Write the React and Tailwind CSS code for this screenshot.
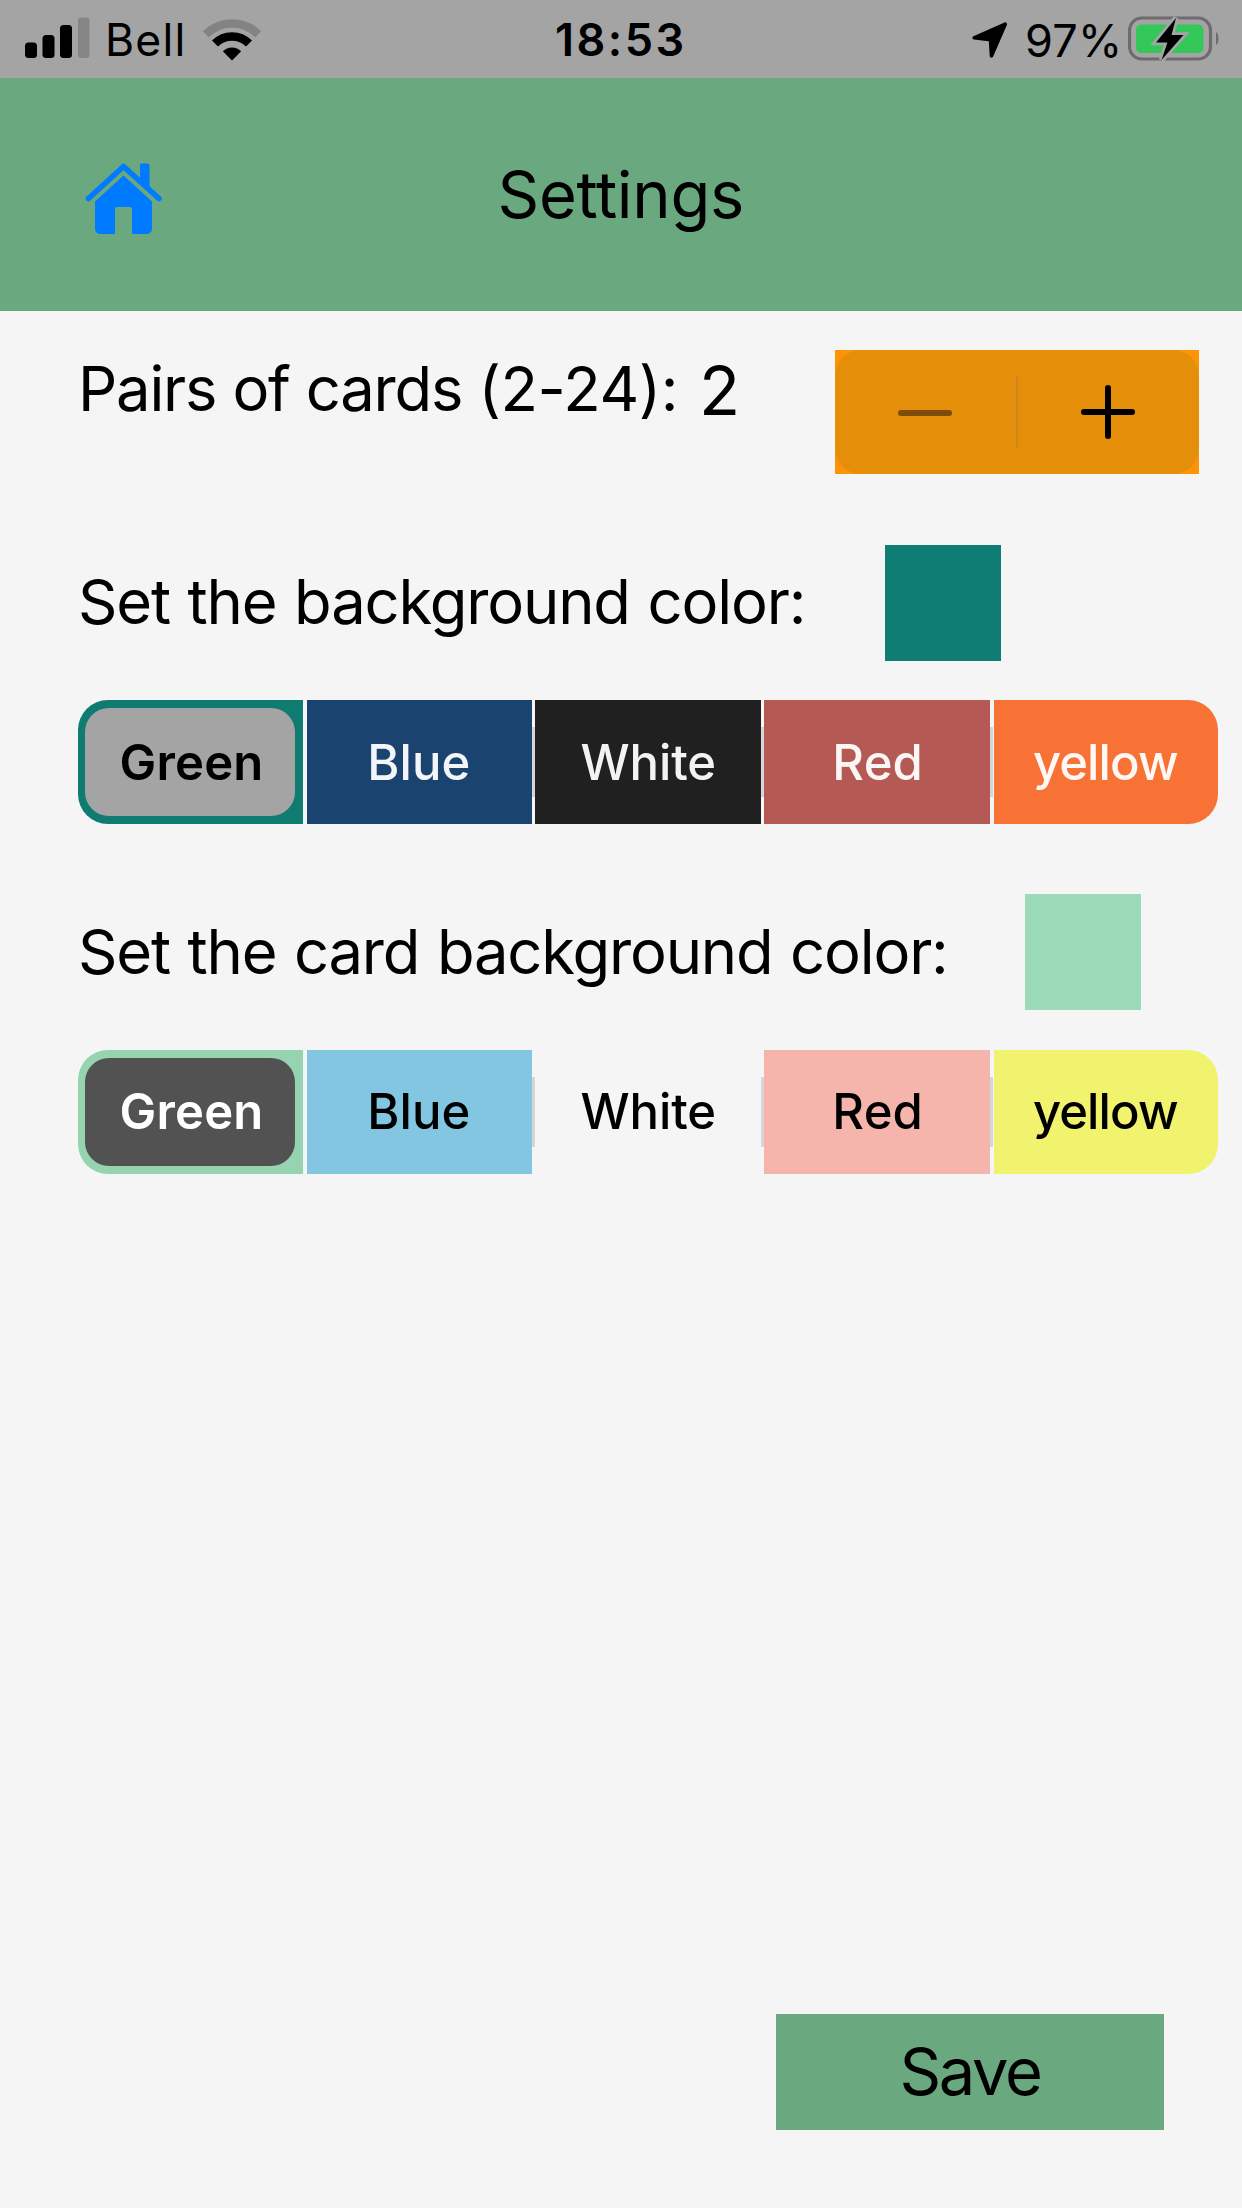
const backgroundColors = [
  { name: "Green", cell: "w-[225px] mr-[4px] rounded-l-[30px] bg-[#0f7b71]", label: "pl-[3px] tracking-[0.2px]", selected: true },
  { name: "Blue", cell: "w-[225.5px] mr-[3px] bg-[#1b436f]", label: "tracking-[0.1px] pr-[1px]" },
  { name: "White", cell: "w-[225.5px] mr-[3.5px] bg-[#202020]", label: "pl-[1px] tracking-[-0.1px]" },
  { name: "Red", cell: "w-[225.5px] mr-[4px] bg-[#b55955]", label: "pl-[2px] tracking-[0.2px]" },
  { name: "yellow", cell: "w-[224.5px] rounded-r-[30px] bg-[#f87236]", label: "pr-[1px] tracking-[-0.9px]" },
];

const cardColors = [
  { name: "Green", cell: "w-[225px] mr-[4px] rounded-l-[30px] bg-[#95d3b1]", label: "pl-[3px] tracking-[0.2px]", selected: true },
  { name: "Blue", cell: "w-[225.5px] mr-[3px] bg-[#83c6e2]", label: "tracking-[0.1px] pr-[1px]" },
  { name: "White", cell: "w-[225.5px] mr-[3.5px]", label: "pl-[1px] tracking-[-0.1px]" },
  { name: "Red", cell: "w-[225.5px] mr-[4px] bg-[#f5b5ac]", label: "pl-[2px] tracking-[0.2px]" },
  { name: "yellow", cell: "w-[224.5px] rounded-r-[30px] bg-[#f1f26e]", label: "pr-[1px] tracking-[-0.9px]" },
];

function SignalBars() {
  return (
    <svg width="66" height="42" viewBox="0 0 66 42">
      <rect x="0" y="25.5" width="12" height="15.5" rx="3.5" />
      <rect x="17.5" y="18" width="12" height="23" rx="3.5" />
      <rect x="35" y="8" width="12" height="33" rx="3.5" />
      <rect x="53" y="0.5" width="11.5" height="40.5" rx="3" fill="#868686" />
    </svg>
  );
}

function Wifi() {
  return (
    <svg width="60" height="44" viewBox="0 0 60 44" fill="none">
      <path d="M3.8 16.3A37 37 0 0 1 56.2 16.3" stroke="#838383" strokeWidth="8.5" />
      <path d="M13 25.5A24 24 0 0 1 47 25.5" stroke="#000" strokeWidth="8.5" />
      <path d="M30 42.5L20.8 33.3A13 13 0 0 1 39.2 33.3Z" fill="#000" />
    </svg>
  );
}

function LocationArrow() {
  return (
    <svg width="38" height="38" viewBox="0 0 38 38">
      <path
        d="M4.200 16.8L35.200 3.2L21.500 34.800L20.500 18.6Z"
        fill="#000"
        stroke="#000"
        strokeWidth="3.6"
        strokeLinejoin="round"
      />
    </svg>
  );
}

function Battery() {
  const bolt = "M48 2L28 26.5H39.5L33.5 44L55.5 19H43.5Z";
  return (
    <svg width="95" height="46" viewBox="0 0 95 46">
      <rect x="1.5" y="2" width="81" height="41" rx="12.5" fill="none" stroke="#6f6a70" strokeWidth="3.2" />
      <rect x="8" y="8.5" width="67.5" height="28.5" rx="5.5" fill="#34c759" />
      <path d="M88 16C91.3 18 91.3 27 88 29Z" fill="#6f6a70" />
      <path d={bolt} fill="#a4a4a4" stroke="#a4a4a4" strokeWidth="5.5" />
      <path d={bolt} fill="#000" />
    </svg>
  );
}

function House() {
  return (
    <svg width="78" height="74" viewBox="0 0 78 74">
      <path d="M3.500 35.500L38.500 3.500L74 35.500" fill="none" stroke="#007aff" strokeWidth="5.6" strokeLinecap="round" strokeLinejoin="round" />
      <path d="M56.5 0.500H62.5Q64.5 0.500 64.5 2.500V25.500L55 17V2Q55 0.500 56.5 0.500Z" fill="#007aff" />
      <path
        d="M38.5 12.5L67 38.5V65Q67 71 61 71H47V46Q47 44 45 44H32Q30 44 30 46V71H16Q10 71 10 65V38.500Z"
        fill="#007aff"
      />
    </svg>
  );
}

function ColorPicker({ options, text, selectedStyle }) {
  return (
    <div className="ml-[77.5px] flex h-[124px]">
      {options.map((o) => (
        <button
          key={o.name}
          className={`relative flex shrink-0 items-center justify-center text-[49px] leading-none ${o.cell} ${text}`}
        >
          {o.selected ? (
            <span
              className={`flex h-[108px] w-[210px] items-center justify-center rounded-[24px] font-semibold ${selectedStyle}`}
            >
              <span className={o.label}>{o.name}</span>
            </span>
          ) : (
            <span className={`font-medium ${o.label}`}>{o.name}</span>
          )}
          {["Blue", "White", "Red"].includes(o.name) && (
            <i className="absolute top-[27px] right-[-3px] h-[70px] w-[3px] bg-[#d6d6d8]" />
          )}
        </button>
      ))}
    </div>
  );
}

export default function App() {
  return (
    <div className="flex h-[2208px] w-[1242px] flex-col overflow-hidden bg-[#f5f5f5] font-['Inter',sans-serif] leading-none text-black">
      <div className="flex h-[78px] shrink-0 bg-[#a4a4a4] text-[44px]">
        <div className="flex w-[555px] pl-[25px]">
          <div className="pt-[17px]"><SignalBars /></div>
          <span className="ml-[14px] w-[97px] pt-[18px] text-[44.500px] tracking-[1.2px]">Bell</span>
          <div className="pt-[18px]"><Wifi /></div>
        </div>
        <span className="w-[415px] pt-[17px] text-[45px] font-semibold tracking-[2.500px]">18:53</span>
        <div className="w-[55px] pt-[21px]"><LocationArrow /></div>
        <span className="w-[103px] pt-[17.500px] text-[45px] tracking-[0.3px]">97%</span>
        <div className="pt-[15.5px]"><Battery /></div>
      </div>

      <header className="flex h-[233px] shrink-0 bg-[#6aa97f]">
        <button className="mt-[84.5px] ml-[84.500px] h-[74px] w-[78px] self-start"><House /></button>
        <h1 className="mt-[83.500px] ml-[335px] text-[65px] tracking-[-0.3px]">Settings</h1>
      </header>

      <div className="flex h-[202px] shrink-0 pt-[39px]">
        <span className="ml-[78px] w-[621px] pt-[8px] text-[61.5px] tracking-[-1.2px] whitespace-nowrap">
          Pairs of cards <span className="tracking-[-0.400px]">(2-24):</span>
        </span>
        <span className="w-[135.500px] pt-[7px] text-[67.500px]">2</span>
        <div className="h-[124px] w-[364.500px] bg-[#fd9408]">
          <div className="flex h-full items-center rounded-[26px] bg-[#e48e09]">
            <button className="flex flex-1 justify-center">
              <span className="mt-[2px] h-[6px] w-[54px] rounded-full bg-[#7d4c06]" />
            </button>
            <div className="h-[70px] w-[2px] bg-[#cf8620]" />
            <button className="flex flex-1 justify-center">
              <svg width="56" height="56" viewBox="0 0 56 56" stroke="#000" strokeWidth="6" strokeLinecap="round">
                <path d="M4 28H52M28 4V52" />
              </svg>
            </button>
          </div>
        </div>
      </div>

      <div className="flex h-[187px] shrink-0 pt-[31.500px]">
        <span className="ml-[78px] w-[807px] pt-[26px] text-[61.5px] tracking-[-1.16px] [word-spacing:1.5px] whitespace-nowrap">
          Set the background color:
        </span>
        <div className="h-[116px] w-[116px] bg-[#107d74]" />
      </div>
      <ColorPicker options={backgroundColors} text="text-white/95" selectedStyle="bg-[#a4a4a4] text-black" />

      <div className="flex h-[225.500px] shrink-0 pt-[69.500px]">
        <span className="ml-[78px] w-[946.500px] pt-[27px] text-[61.5px] tracking-[-1.18px] [word-spacing:1.5px] whitespace-nowrap">
          Set the card background color:
        </span>
        <div className="h-[116px] w-[116px] bg-[#9adab8]" />
      </div>
      <ColorPicker options={cardColors} text="text-black" selectedStyle="bg-[#525252] text-white" />

      <button className="mt-auto mr-[78px] mb-[78px] flex h-[116.5px] w-[388px] shrink-0 items-center justify-center self-end bg-[#6aa97f] text-[65px] tracking-[-2.3px]">
        Save
      </button>
    </div>
  );
}
